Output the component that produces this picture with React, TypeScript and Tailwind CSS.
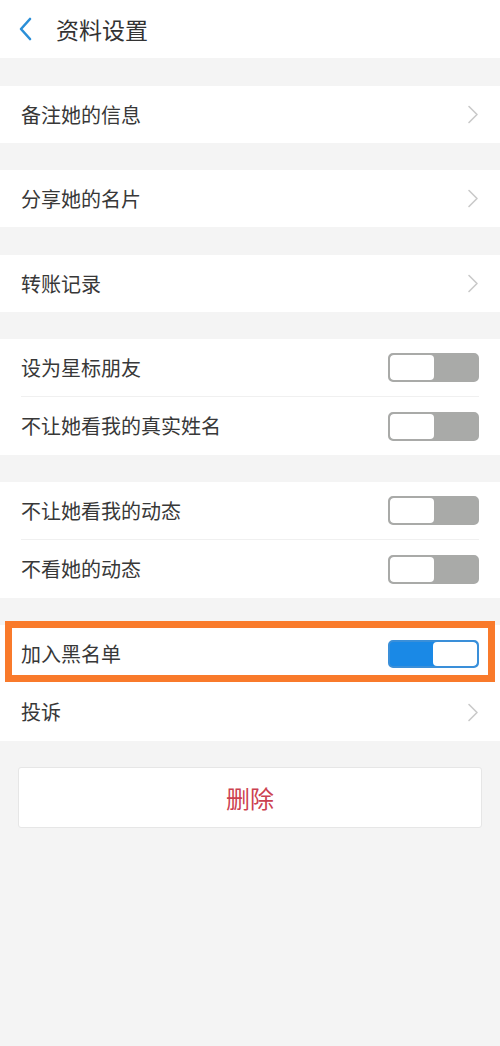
import { useState } from "react";

const font = { fontFamily: '"Noto Sans CJK SC", "Noto Sans", sans-serif' };

function Chevron() {
  return (
    <svg width="12" height="19" viewBox="0 0 12 19" fill="none">
      <path d="M2 1.5 L10 9.5 L2 17.5" stroke="#c9c9c9" strokeWidth="1.6" strokeLinecap="round" strokeLinejoin="round" />
    </svg>
  );
}

function Toggle({ on }: { on: boolean }) {
  if (on) {
    return (
      <div className="flex h-[28px] w-[91px] overflow-hidden rounded-[5px] border-2 border-[#3a8fd9] bg-[#1a89e6]">
        <div className="flex-1" />
        <div className="w-[44px] rounded-[4px] bg-white" />
      </div>
    );
  }
  return (
    <div className="flex h-[29px] w-[91px] overflow-hidden rounded-[5px] border-2 border-[#a9aaa8] bg-[#a9aaa8]">
      <div className="w-[44px] rounded-[4px] bg-white" />
      <div className="flex-1" />
    </div>
  );
}

function Row({ label, right, divider, tall }: { label: string; right: React.ReactNode; divider?: boolean; tall?: boolean }) {
  return (
    <div className={`flex items-center bg-white px-[21px] ${tall ? "h-[58px]" : "h-[57px]"}`}>
      <div className={`flex h-full flex-1 items-center justify-between ${divider ? "border-b border-[#f0f0f0]" : ""}`}>
        <span className="text-[20px] text-[#383838]">{label}</span>
        {right}
      </div>
    </div>
  );
}

export default function App() {
  const [blocked] = useState(true);

  return (
    <div className="min-h-[1046px] w-[500px] bg-[#f4f4f4]" style={font}>
      <div className="flex h-[58px] items-center bg-white pl-[18px]">
        <svg width="16" height="24" viewBox="0 0 16 24" fill="none">
          <path d="M12 2 L3 12 L12 22" stroke="#2a8fd8" strokeWidth="2.6" strokeLinecap="round" strokeLinejoin="round" />
        </svg>
        <span className="ml-[22px] text-[23px] text-[#333]">资料设置</span>
      </div>

      <div className="h-[28px]" />
      <Row label="备注她的信息" right={<Chevron />} />
      <div className="h-[27px]" />
      <Row label="分享她的名片" right={<Chevron />} />
      <div className="h-[28px]" />
      <Row label="转账记录" right={<Chevron />} />
      <div className="h-[27px]" />
      <Row label="设为星标朋友" right={<Toggle on={false} />} divider tall />
      <Row label="不让她看我的真实姓名" right={<Toggle on={false} />} tall />
      <div className="h-[27px]" />
      <Row label="不让她看我的动态" right={<Toggle on={false} />} divider tall />
      <Row label="不看她的动态" right={<Toggle on={false} />} tall />
      <div className="h-[27px]" />
      <div className="relative">
        <Row label="加入黑名单" right={<Toggle on={blocked} />} tall />
        <div className="pointer-events-none absolute left-[5px] right-[5px] top-[-4px] bottom-[1px] border-[7px] border-[#f97a2b]" />
      </div>
      <Row label="投诉" right={<Chevron />} tall />

      <div className="px-[18px] pt-[26px]">
        <div className="flex h-[61px] items-center justify-center rounded-[3px] border border-[#e6e6e6] bg-white">
          <span className="text-[24px] text-[#cc4150]">删除</span>
        </div>
      </div>
    </div>
  );
}
